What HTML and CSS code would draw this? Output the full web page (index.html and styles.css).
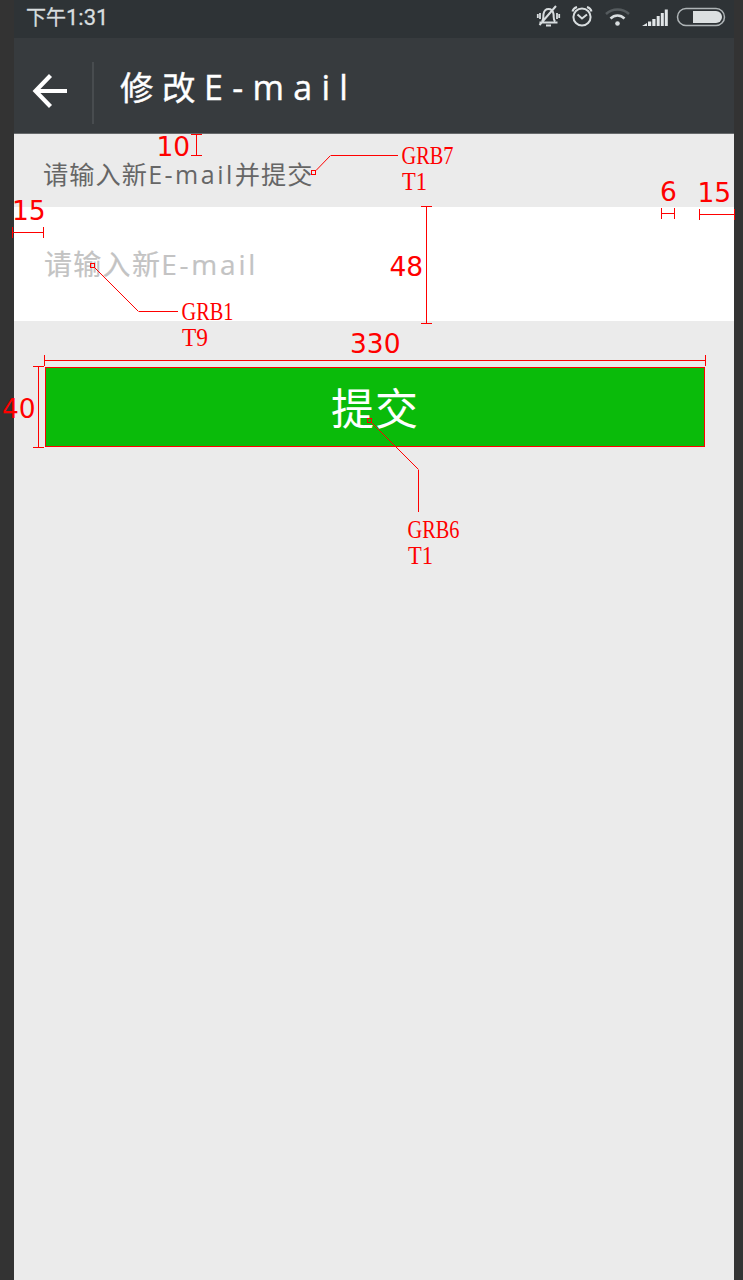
FILE: index.html
```html
<!DOCTYPE html>
<html lang="zh-CN">
<head>
<meta charset="utf-8">
<title>修改E-mail</title>
<link rel="stylesheet" href="styles.css">
</head>
<body>
<div class="board">
  <main class="phone">
    <div class="status">
      <span class="time">下午<span class="clock">1:31</span></span>
      <svg class="status-icons" width="194" height="30" viewBox="0 0 194 30" fill="none" stroke="#d8dddf" stroke-width="2">
        <g stroke-width="2">
          <path d="M7.500 22.500h18M10 21.500c2-2 1-4.500 1.500-7.500.6-3 2-5 5-5s4.500 2 5 5c.5 3-.5 5.500 1.500 7.500M7.500 25L24 6"/>
          <path d="M14 25.500h5"/>
          <path d="M8 13v6M5.800 14v4M25 13v6M27.200 14v4" stroke-width="1.800"/>
        </g>
        <circle cx="50" cy="17" r="8.600"/>
        <path d="M45.500 14.500l4.500 4 5-4M40.500 11.500c.5-2.500 2-3.800 4.500-4.500M59.500 11.500c-.5-2.500-2-3.800-4.500-4.500"/>
        <path d="M74 14c6.500-6 16.500-6 23 0" stroke="#555b5e" stroke-width="2.500"/>
        <path d="M78.500 18.500c4-4 10-4 14 0" stroke-width="2.500"/>
        <circle cx="85.500" cy="23.500" r="2.300" fill="#d8dddf" stroke="none"/>
        <path d="M110 26l5-3v3zM116 21.500h3.200v4.500h-3.200zM120.300 19h3.200v7h-3.200zM124.700 16h3v10h-3zM128.800 13h3v13h-3zM132.800 9.500h3v16.500h-3z" fill="#e2e6e8" stroke="none"/>
        <rect x="145.500" y="8.500" width="47" height="17" rx="8.500" stroke="#aeb4b6" stroke-width="1.500"/>
        <path d="M161 11h23a6 6 0 0 1 0 12h-23z" fill="#dce0e1" stroke="none"/>
      </svg>
    </div>
    <header class="header">
      <svg class="back" width="36" height="36" viewBox="0 0 36 36" fill="none" stroke="#fff" stroke-width="4.200">
        <path d="M35 18H4M18.500 2.500L3.500 18l15 15.500"/>
      </svg>
      <span class="divider"></span>
      <h1 class="title">修改<span class="title-latin">E-mail</span></h1>
    </header>
    <p class="hint">请输入新<span class="hint-latin">E-mail</span>并提交</p>
    <div class="field">请输入新<span class="field-latin">E-mail</span></div>
    <div class="actions"><button class="submit">提交</button></div>
  </main>
  <svg class="notes" width="743" height="1280" viewBox="0 0 743 1280">
    <g class="rules">
      <path d="M191 134.500h11M196.500 134v22M191 155.500h11"/>
      <path d="M12.500 227v11M12 232.500h32M43.500 227v11"/>
      <path d="M661.500 208v11M661 213.500h14M674.500 208v11"/>
      <path d="M699.500 209v11M699 214.500h36M734.500 209v11"/>
      <path d="M421 206.500h11M426.500 206v118M421 323.500h11"/>
      <path d="M44.500 355v11M44 360.500h662M705.500 355v11"/>
      <path d="M33 366.500h11M38.500 366v82M33 447.500h11"/>
      <path d="M311.500 170.500h4v4h-4zM398 155.500h-67.500"/>
      <path d="M90.500 263.500h4v4h-4zM178 311.500h-39.500"/>
      <path d="M367.500 418.500h4v4h-4zM418.500 512v-42.500"/>
    </g>
    <g class="leaders"><path d="M316 170.500l14.500-15M95 268l43.500 43.500M372 423l46.500 46.500"/></g>
    <g class="sizes">
      <text x="156.500" y="156">10</text>
      <text x="12" y="220">15</text>
      <text x="660" y="201">6</text>
      <text x="697.500" y="202">15</text>
      <text x="389.500" y="276">48</text>
      <text x="350" y="353">330</text>
      <text x="2" y="418">40</text>
    </g>
    <g class="codes">
      <text x="401.500" y="164" textLength="52" lengthAdjust="spacingAndGlyphs">GRB7</text>
      <text x="402" y="190" textLength="25" lengthAdjust="spacingAndGlyphs">T1</text>
      <text x="181.500" y="320" textLength="52" lengthAdjust="spacingAndGlyphs">GRB1</text>
      <text x="182" y="346" textLength="26" lengthAdjust="spacingAndGlyphs">T9</text>
      <text x="407.500" y="538" textLength="52" lengthAdjust="spacingAndGlyphs">GRB6</text>
      <text x="408" y="564" textLength="25" lengthAdjust="spacingAndGlyphs">T1</text>
    </g>
  </svg>
</div>
</body>
</html>
```
FILE: styles.css
```css
* { box-sizing: border-box; }
body { margin: 0; background: #333; }
.board {
  position: relative;
  width: 743px;
  height: 1280px;
  padding: 0 9px 0 14px;
  overflow: hidden;
  background: #333;
}
.phone {
  display: flex;
  flex-direction: column;
  height: 1280px;
  background: #ebebeb;
  font-family: "Noto Sans CJK SC", sans-serif;
}
.status {
  display: flex;
  justify-content: space-between;
  height: 38px;
  padding: 0 8px 0 12px;
  background: #2e3336;
}
.time {
  color: #d8dddf;
  font-size: 20px;
  line-height: 34px;
  -webkit-text-stroke: 0.3px #d8dddf;
}
.clock {
  font-family: Roboto, "Liberation Sans", sans-serif;
  font-size: 22px;
}
.header {
  display: flex;
  align-items: center;
  height: 96px;
  padding: 8px 0 0 18px;
  background: #373b3e;
  border-bottom: 1px solid #66696b;
}
.back { flex: none; margin-top: 2px; }
.divider {
  width: 2px;
  height: 62px;
  margin: 6px 26px 0 24px;
  background: #484c4f;
}
.title {
  margin: 0 0 6px;
  color: #fff;
  font-size: 33.5px;
  font-weight: 400;
  line-height: 50px;
  letter-spacing: 8.5px;
  white-space: nowrap;
  -webkit-text-stroke: 0.4px #fff;
}
.title-latin {
  font-family: "Open Sans", sans-serif;
  font-size: 34px;
  letter-spacing: 9.3px;
}
.hint {
  height: 73px;
  margin: 0;
  padding: 19px 0 0 29px;
  color: #666;
  font-size: 25.2px;
  line-height: 40px;
  letter-spacing: 1.1px;
}
.hint-latin {
  font-family: "Open Sans", sans-serif;
  font-size: 25px;
  letter-spacing: 2.5px;
}
.field {
  height: 114px;
  padding: 36px 0 0 30px;
  background: #fff;
  color: #c3c3c3;
  font-size: 28px;
  line-height: 40px;
  letter-spacing: 1.3px;
  -webkit-text-stroke: 0.2px #c3c3c3;
}
.field-latin {
  font-family: "Open Sans", sans-serif;
  letter-spacing: 2.8px;
}
.actions { padding: 46px 29px 0 31px; }
.submit {
  display: block;
  width: 660px;
  height: 80px;
  padding: 0 0 3px;
  border: 1px solid #f00;
  background: #0abb0a;
  color: #fff;
  font-family: "Noto Sans CJK SC", sans-serif;
  font-size: 43px;
  line-height: 60px;
  letter-spacing: 1px;
}
.notes { position: absolute; left: 0; top: 0; }
.rules { fill: none; stroke: #f00; shape-rendering: crispEdges; }
.leaders { fill: none; stroke: #f00; stroke-width: 1; }
.sizes { fill: #f00; font-family: "DejaVu Sans", sans-serif; font-size: 26.5px; }
.codes { fill: #f00; font-family: "Liberation Serif", serif; font-size: 26px; }
```
